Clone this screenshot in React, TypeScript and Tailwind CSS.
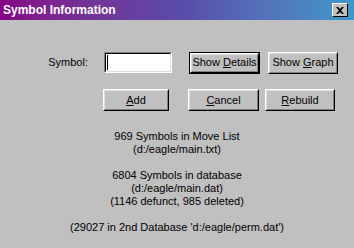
import React from "react";

function Btn({ children, def = false, className = "" }: { children: React.ReactNode; def?: boolean; className?: string }) {
  const inner = (
    <div className="h-full w-full border border-t-white border-l-white border-r-black border-b-black">
      <div className="h-full w-full border border-t-[#dfdfdf] border-l-[#dfdfdf] border-r-[#808080] border-b-[#808080] flex items-center justify-center text-black">
        {children}
      </div>
    </div>
  );
  if (def) {
    return <div className={`border border-black ${className}`}>{inner}</div>;
  }
  return <div className={className}>{inner}</div>;
}

export default function App() {
  return (
    <div
      className="w-[354px] h-[248px] bg-[#c0c0c0] overflow-hidden text-[11px] text-black"
      style={{ fontFamily: '"Liberation Sans", Arial, sans-serif' }}
    >
      <div className="h-[20px] flex items-center justify-between pl-[3px] pr-[6px] bg-gradient-to-r from-[#850085] via-[#5a4aa8] to-[#3c98cc]">
        <span className="text-white font-bold text-[12px] leading-none">Symbol Information</span>
        <div className="w-[16px] h-[14px] bg-[#c0c0c0] border border-t-white border-l-white border-r-black border-b-black flex items-center justify-center">
          <svg width="8" height="7" viewBox="0 0 8 7">
            <path d="M0 0h2l2 2 2-2h2L5 3.5 8 7H6L4 5 2 7H0l3-3.5z" fill="black" />
          </svg>
        </div>
      </div>

      <div className="flex items-center mt-[32px] h-[21px]">
        <div className="w-[88px] text-right">Symbol:</div>
        <div className="ml-[16px] w-[68px] h-[21px] bg-white border border-t-[#808080] border-l-[#808080] border-r-white border-b-white">
          <div className="h-full w-full border border-t-black border-l-black border-r-[#dfdfdf] border-b-[#dfdfdf] relative">
            <div className="absolute left-[1px] top-[1px] w-[1px] h-[15px] bg-black" />
          </div>
        </div>
        <Btn def className="ml-[17px] w-[71px] h-[22px]">
          <span>
            Show <u>D</u>etails
          </span>
        </Btn>
        <Btn className="ml-[8px] w-[70px] h-[22px]">
          <span>
            Show <u>G</u>raph
          </span>
        </Btn>
      </div>

      <div className="flex items-center mt-[16px] h-[22px]">
        <Btn className="ml-[103px] w-[66px] h-[22px]">
          <span>
            <u>A</u>dd
          </span>
        </Btn>
        <Btn className="ml-[19px] w-[71px] h-[22px]">
          <span>
            <u>C</u>ancel
          </span>
        </Btn>
        <Btn className="ml-[6px] w-[70px] h-[22px]">
          <span>
            <u>R</u>ebuild
          </span>
        </Btn>
      </div>

      <div className="mt-[19px] w-[354px] flex flex-col items-center leading-[13px]">
        <div>969 Symbols in Move List</div>
        <div>(d:/eagle/main.txt)</div>
        <div>&nbsp;</div>
        <div>6804 Symbols in database</div>
        <div>(d:/eagle/main.dat)</div>
        <div>(1146 defunct, 985 deleted)</div>
        <div>&nbsp;</div>
        <div>(29027 in 2nd Database 'd:/eagle/perm.dat')</div>
      </div>
    </div>
  );
}
